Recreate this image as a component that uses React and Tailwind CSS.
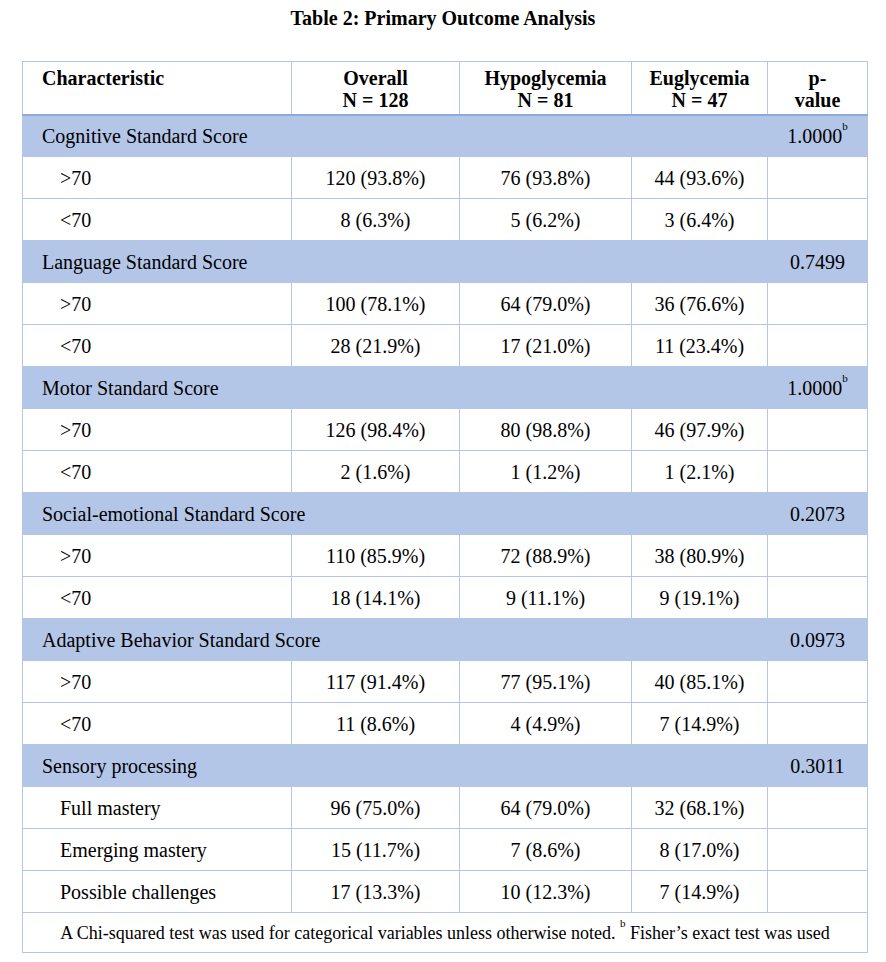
import React from 'react';

const sections = [
  {
    label: 'Cognitive Standard Score',
    p: '1.0000',
    fisher: true,
    rows: [
      ['>70', '120 (93.8%)', '76 (93.8%)', '44 (93.6%)'],
      ['<70', '8 (6.3%)', '5 (6.2%)', '3 (6.4%)'],
    ],
  },
  {
    label: 'Language Standard Score',
    p: '0.7499',
    rows: [
      ['>70', '100 (78.1%)', '64 (79.0%)', '36 (76.6%)'],
      ['<70', '28 (21.9%)', '17 (21.0%)', '11 (23.4%)'],
    ],
  },
  {
    label: 'Motor Standard Score',
    p: '1.0000',
    fisher: true,
    rows: [
      ['>70', '126 (98.4%)', '80 (98.8%)', '46 (97.9%)'],
      ['<70', '2 (1.6%)', '1 (1.2%)', '1 (2.1%)'],
    ],
  },
  {
    label: 'Social-emotional Standard Score',
    p: '0.2073',
    rows: [
      ['>70', '110 (85.9%)', '72 (88.9%)', '38 (80.9%)'],
      ['<70', '18 (14.1%)', '9 (11.1%)', '9 (19.1%)'],
    ],
  },
  {
    label: 'Adaptive Behavior Standard Score',
    p: '0.0973',
    rows: [
      ['>70', '117 (91.4%)', '77 (95.1%)', '40 (85.1%)'],
      ['<70', '11 (8.6%)', '4 (4.9%)', '7 (14.9%)'],
    ],
  },
  {
    label: 'Sensory processing',
    p: '0.3011',
    rows: [
      ['Full mastery', '96 (75.0%)', '64 (79.0%)', '32 (68.1%)'],
      ['Emerging mastery', '15 (11.7%)', '7 (8.6%)', '8 (17.0%)'],
      ['Possible challenges', '17 (13.3%)', '10 (12.3%)', '7 (14.9%)'],
    ],
  },
];

const cell = 'border border-[#b4c6e7] h-[42px] p-0 align-middle';
const head = 'border border-[#b4c6e7] border-b-2 border-b-[#8eaadb] pt-[5px] align-top font-bold';

export default function App() {
  return (
    <div className="w-[886px] h-[962px] bg-white text-black font-['Liberation_Serif',serif]">
      <h1 className="pt-[6px] text-center text-[20px] font-bold leading-[24px]">
        Table 2: Primary Outcome Analysis
      </h1>

      <table className="mt-[31px] ml-[22px] w-[845px] border-collapse table-fixed text-[20px] leading-[22px]">
        <colgroup>
          <col className="w-[269px]" />
          <col className="w-[168px]" />
          <col className="w-[172px]" />
          <col className="w-[136px]" />
          <col className="w-[100px]" />
        </colgroup>
        <thead>
          <tr>
            <th className={`${head} h-[53px] pl-[19px] text-left`}>Characteristic</th>
            <th className={`${head} text-center`}>
              Overall
              <br />N = 128
            </th>
            <th className={`${head} text-center`}>
              Hypoglycemia
              <br />N = 81
            </th>
            <th className={`${head} text-center`}>
              Euglycemia
              <br />N = 47
            </th>
            <th className={`${head} text-center`}>
              p-
              <br />
              value
            </th>
          </tr>
        </thead>
        <tbody>
          {sections.map((s) => (
            <React.Fragment key={s.label}>
              <tr className="bg-[#b4c6e7]">
                <td colSpan={4} className={`${cell} pl-[19px]`}>
                  {s.label}
                </td>
                <td className={`${cell} text-center`}>
                  {s.p}
                  {s.fisher && <sup className="text-[11px] align-[7px]">b</sup>}
                </td>
              </tr>
              {s.rows.map((r) => (
                <tr key={s.label + r[0]}>
                  <td className={`${cell} pl-[37px]`}>{r[0]}</td>
                  <td className={`${cell} text-center`}>{r[1]}</td>
                  <td className={`${cell} text-center`}>{r[2]}</td>
                  <td className={`${cell} text-center`}>{r[3]}</td>
                  <td className={cell}></td>
                </tr>
              ))}
            </React.Fragment>
          ))}
          <tr>
            <td colSpan={5} className="border border-[#b4c6e7] h-[40px] text-center text-[18px]">
              A Chi-squared test was used for categorical variables unless otherwise noted.{' '}
              <sup className="text-[11px] align-[6px]">b</sup> Fisher’s exact test was used
            </td>
          </tr>
        </tbody>
      </table>
    </div>
  );
}
